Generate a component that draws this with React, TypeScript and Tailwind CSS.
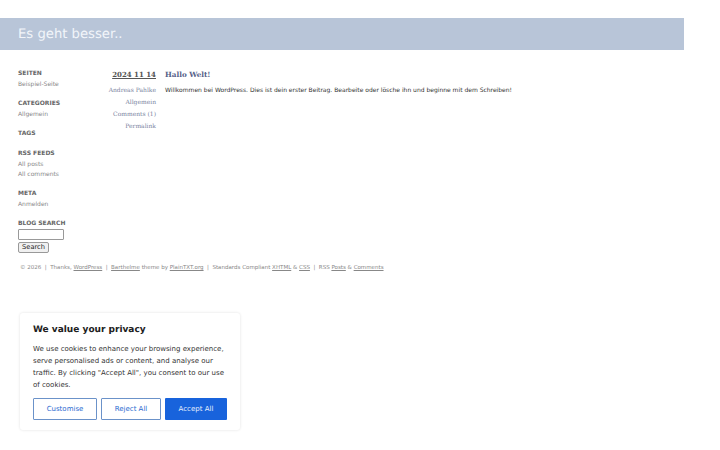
import React from "react";

function Section({ title, items, extra }: { title: string; items?: string[]; extra?: boolean }) {
  return (
    <div className={extra ? "mb-[10px]" : "mb-[9px]"}>
      <h3 className="text-[6px] leading-[10px] mb-[1px] font-bold text-[#666] uppercase">{title}</h3>
      {items && items.length > 0 && (
        <ul>
          {items.map((i) => (
            <li key={i} className="text-[6px] leading-[10px] text-[#888]">{i}</li>
          ))}
        </ul>
      )}
    </div>
  );
}

export default function App() {
  return (
    <div className="w-[720px] h-[450px] relative overflow-hidden bg-white font-['DejaVu_Sans',sans-serif] antialiased [text-rendering:geometricPrecision]">
      <div className="w-[684px] pt-[18px]">
        <header className="h-[32px] bg-[#b8c5d8] pl-[18px] flex items-center">
          <h1 className="text-[13.2px] leading-[32px] pt-[2px] text-[#f2f5fa]">Es geht besser..</h1>
        </header>
        <div className="flex pt-[18px] pl-[18px]">
          <aside className="w-[76px] shrink-0 pt-[1px]">
            <Section title="Seiten" items={["Beispiel-Seite"]} />
            <Section title="Categories" items={["Allgemein"]} />
            <Section title="Tags" extra />
            <Section title="RSS Feeds" items={["All posts", "All comments"]} />
            <Section title="Meta" items={["Anmelden"]} />
            <div>
              <h3 className="text-[6px] leading-[10px] font-bold text-[#666] uppercase">Blog Search</h3>
              <input className="block w-[46px] h-[11px] border border-[#999] bg-white rounded-[1px]" />
              <button className="block mt-[2px] h-[11px] w-[31px] border border-[#999] bg-[#f0f0f0] rounded-[2px] text-[6.67px] leading-[9px] text-[#222]">Search</button>
            </div>
          </aside>
          <div className="w-[62px] shrink-0 pt-[1px] text-right font-['DejaVu_Serif',serif]">
            <div className="text-[7px] leading-[12px] font-bold text-[#555] underline">2024 11 14</div>
            <ul className="mt-[4px] text-[6px] leading-[12px] text-[#7a84a0]">
              <li>Andreas Pahlke</li>
              <li>Allgemein</li>
              <li>Comments (1)</li>
              <li>Permalink</li>
            </ul>
          </div>
          <main className="pl-[9px] pt-[1px]">
            <h2 className="font-['DejaVu_Serif',serif] text-[7.2px] leading-[12px] font-bold text-[#556088]">Hallo Welt!</h2>
            <p className="mt-[4px] text-[6px] leading-[12px] text-[#333] whitespace-nowrap">Willkommen bei WordPress. Dies ist dein erster Beitrag. Bearbeite oder lösche ihn und beginne mit dem Schreiben!</p>
          </main>
        </div>
        <footer className="pl-[20px] mt-[11px] text-[5.53px] leading-[9px] text-[#888] whitespace-pre">
          © 2026  |  Thanks, <span className="underline">WordPress</span>  |  <span className="underline">Barthelme</span> theme by <span className="underline">PlainTXT.org</span>  |  Standards Compliant <span className="underline">XHTML</span> &amp; <span className="underline">CSS</span>  |  RSS <span className="underline">Posts</span> &amp; <span className="underline">Comments</span>
        </footer>
      </div>

      <div className="absolute left-[20px] top-[313px] w-[220px] h-[117px] bg-white rounded-[3px] shadow-[0_0_3px_rgba(0,0,0,0.12)] px-[13px] pt-[11px]">
        <p className="text-[9px] leading-[12px] font-bold text-[#212121]">We value your privacy</p>
        <p className="mt-[7px] text-[7px] leading-[12px] text-[#333]">We use cookies to enhance your browsing experience, serve personalised ads or content, and analyse our traffic. By clicking "Accept All", you consent to our use of cookies.</p>
        <div className="flex gap-[4px] mt-[7px]">
          <button className="w-[64px] h-[22px] border border-[#6b92c9] bg-white text-[7px] text-[#2a6ad0] rounded-[1px]">Customise</button>
          <button className="w-[60px] h-[22px] border border-[#6b92c9] bg-white text-[7px] text-[#2a6ad0] rounded-[1px]">Reject All</button>
          <button className="w-[62px] h-[22px] bg-[#1863dc] text-[7px] text-[#e8f0fc] rounded-[1px]">Accept All</button>
        </div>
      </div>
    </div>
  );
}
